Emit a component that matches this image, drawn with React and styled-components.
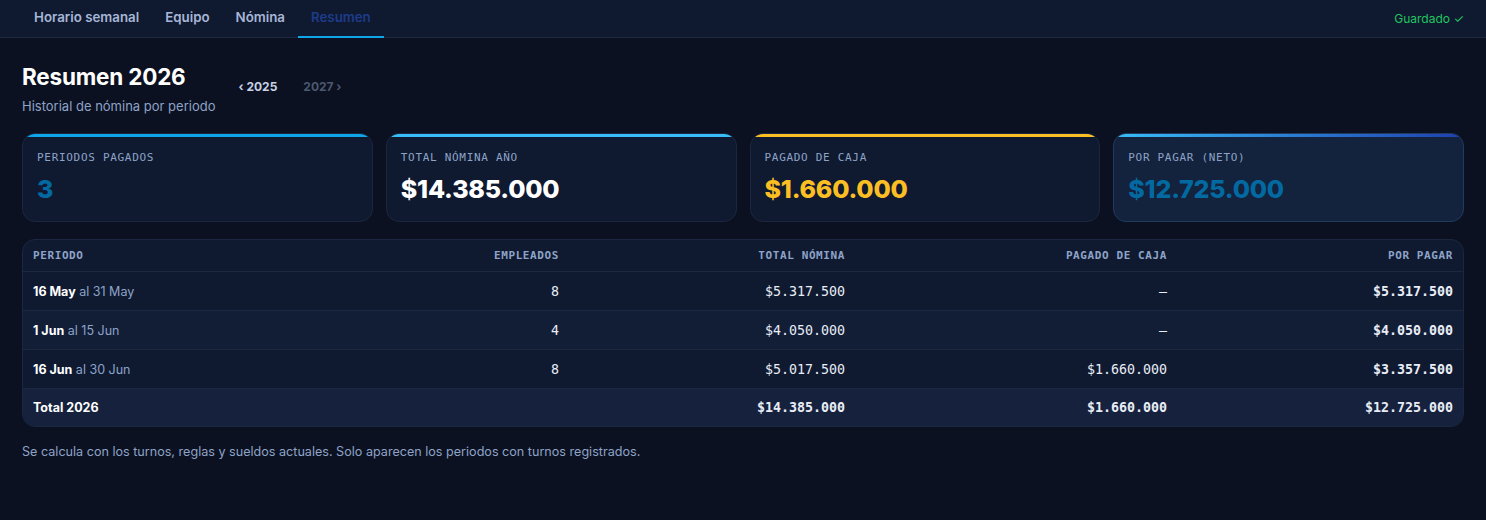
import React from 'react';
import styled, { createGlobalStyle } from 'styled-components';

const GlobalStyle = createGlobalStyle`
	html, body {
		margin: 0;
		padding: 0;
		background: #0b1120;
		font-family: Inter, 'Noto Sans', sans-serif;
		color: #e2e8f0;
	}
`;

const tabs = ['Horario semanal', 'Equipo', 'Nómina', 'Resumen'];

const cards = [
	{ label: 'PERIODOS PAGADOS', value: '3', accent: '#0ea5e9', color: '#0369a1' },
	{ label: 'TOTAL NÓMINA AÑO', value: '$14.385.000', accent: '#38bdf8', color: '#ffffff' },
	{ label: 'PAGADO DE CAJA', value: '$1.660.000', accent: '#fbbf24', color: '#fbbf24' },
	{ label: 'POR PAGAR (NETO)', value: '$12.725.000', accent: 'linear-gradient(90deg, #38bdf8, #1e40af)', color: '#0369a1', highlight: true },
];

const rows = [
	{ from: '16 May', to: 'al 31 May', emp: '8', total: '$5.317.500', caja: '—', pagar: '$5.317.500' },
	{ from: '1 Jun', to: 'al 15 Jun', emp: '4', total: '$4.050.000', caja: '—', pagar: '$4.050.000' },
	{ from: '16 Jun', to: 'al 30 Jun', emp: '8', total: '$5.017.500', caja: '$1.660.000', pagar: '$3.357.500' },
];

export default function App() {
	return (
		<>
			<GlobalStyle />
			<Nav>
				<Tabs>
					{tabs.map((t) => (
						<Tab key={t} active={t === 'Resumen'}>{t}</Tab>
					))}
				</Tabs>
				<Saved>Guardado ✓</Saved>
			</Nav>
			<Main>
				<Header>
					<div>
						<Title>Resumen 2026</Title>
						<Subtitle>Historial de nómina por periodo</Subtitle>
					</div>
					<YearNav>
						<YearLink>‹ 2025</YearLink>
						<YearLink disabled>2027 ›</YearLink>
					</YearNav>
				</Header>
				<Cards>
					{cards.map((c) => (
						<Card key={c.label} accent={c.accent} highlight={c.highlight}>
							<CardLabel>{c.label}</CardLabel>
							<CardValue color={c.color}>{c.value}</CardValue>
						</Card>
					))}
				</Cards>
				<TableWrap>
					<Table>
						<colgroup>
							<col style={{ width: 340 }} />
							<col style={{ width: 206 }} />
							<col style={{ width: 286 }} />
							<col style={{ width: 322 }} />
							<col />
						</colgroup>
						<thead>
							<tr>
								<Th>Periodo</Th>
								<Th right>Empleados</Th>
								<Th right>Total nómina</Th>
								<Th right>Pagado de caja</Th>
								<Th right>Por pagar</Th>
							</tr>
						</thead>
						<tbody>
							{rows.map((r, i) => (
								<Tr key={r.from} odd={i % 2 === 1}>
									<Td>
										<strong>{r.from}</strong> <Muted>{r.to}</Muted>
									</Td>
									<Td right mono>{r.emp}</Td>
									<Td right mono>{r.total}</Td>
									<Td right mono>{r.caja}</Td>
									<Td right mono bold>{r.pagar}</Td>
								</Tr>
							))}
							<TotalRow>
								<Td><strong>Total 2026</strong></Td>
								<Td />
								<Td right mono bold>$14.385.000</Td>
								<Td right mono bold>$1.660.000</Td>
								<Td right mono bold>$12.725.000</Td>
							</TotalRow>
						</tbody>
					</Table>
				</TableWrap>
				<Note>Se calcula con los turnos, reglas y sueldos actuales. Solo aparecen los periodos con turnos registrados.</Note>
			</Main>
		</>
	);
}

// Styles

const mono = `'DejaVu Sans Mono', 'Liberation Mono', monospace`;

const Nav = styled.nav`
	height: 37px;
	background: #0f1a30;
	border-bottom: 1px solid #1c2840;
	display: flex;
	align-items: stretch;
	justify-content: space-between;
	padding: 0 22px 0 21px;
`;

const Tabs = styled.div`
	display: flex;
	align-items: stretch;
`;

const Tab = styled.div`
	display: flex;
	align-items: center;
	padding: 0 13px 3px;
	font-size: 13.3px;
	font-weight: 600;
	color: ${({ active }) => (active ? '#1e3a8a' : '#a7b6d6')};
	border-bottom: 2px solid ${({ active }) => (active ? '#0ea5e9' : 'transparent')};
	box-sizing: border-box;
	margin-bottom: -1px;
`;

const Saved = styled.div`
	display: flex;
	align-items: center;
	font-size: 12px;
	color: #22c55e;
`;

const Main = styled.main`
	padding: 26px 22px 40px;
`;

const Header = styled.div`
	display: flex;
	align-items: flex-start;
	gap: 23px;
	margin-bottom: 19px;
`;

const Title = styled.h1`
	margin: 0;
	font-size: 22.5px;
	font-weight: 700;
	color: #ffffff;
	letter-spacing: -0.2px;
	line-height: 26px;
`;

const Subtitle = styled.div`
	margin-top: 8px;
	font-size: 13px;
	color: #8ea3c7;
`;

const YearNav = styled.div`
	display: flex;
	gap: 26px;
	margin-top: 15px;
`;

const YearLink = styled.span`
	font-size: 12px;
	font-weight: 700;
	color: ${({ disabled }) => (disabled ? '#4b5870' : '#c7d2e6')};
`;

const Cards = styled.div`
	display: grid;
	grid-template-columns: repeat(4, 1fr);
	gap: 13px;
	margin-bottom: 17px;
`;

const Card = styled.div`
	position: relative;
	height: 89px;
	box-sizing: border-box;
	padding: 17px 14px;
	border-radius: 13px;
	background: ${({ highlight }) => (highlight ? '#13223d' : '#0f1a31')};
	border: 1px solid ${({ highlight }) => (highlight ? '#213a60' : '#1b2740')};
	overflow: hidden;

	&::before {
		content: '';
		position: absolute;
		left: 0;
		right: 0;
		top: 0;
		height: 3px;
		background: ${({ accent }) => accent};
	}
`;

const CardLabel = styled.div`
	font-family: ${mono};
	font-size: 11px;
	letter-spacing: 0.7px;
	color: #8ea3c7;
`;

const CardValue = styled.div`
	margin-top: 10px;
	font-size: 25px;
	font-weight: 800;
	color: ${({ color }) => color};
	letter-spacing: -0.2px;
`;

const TableWrap = styled.div`
	border: 1px solid #1b2740;
	border-radius: 13px;
	overflow: hidden;
	background: #0f1a31;
`;

const Table = styled.table`
	width: 100%;
	border-collapse: collapse;
	table-layout: fixed;
`;

const Th = styled.th`
	height: 31px;
	padding: 0 10px;
	font-family: ${mono};
	font-size: 11px;
	font-weight: 700;
	text-transform: uppercase;
	letter-spacing: 0.6px;
	color: #8ea3c7;
	text-align: ${({ right }) => (right ? 'right' : 'left')};
	border-bottom: 1px solid #1c2840;
`;

const Tr = styled.tr`
	background: ${({ odd }) => (odd ? '#121d36' : '#0f1a31')};
	border-bottom: 1px solid #1c2840;
`;

const TotalRow = styled.tr`
	background: #16223d;

	td {
		height: 37px;
	}
`;

const Td = styled.td`
	height: 38px;
	padding: 0 10px;
	font-size: ${({ mono: m }) => (m ? '13.3px' : '12.5px')};
	color: #e8edf6;
	text-align: ${({ right }) => (right ? 'right' : 'left')};
	font-family: ${({ mono: m }) => (m ? mono : 'inherit')};
	font-weight: ${({ bold }) => (bold ? 700 : 400)};

	strong {
		font-weight: 700;
		color: #ffffff;
	}
`;

const Muted = styled.span`
	color: #8ea3c7;
`;

const Note = styled.p`
	margin: 17px 0 0;
	font-size: 12.6px;
	color: #8ea3c7;
`;
